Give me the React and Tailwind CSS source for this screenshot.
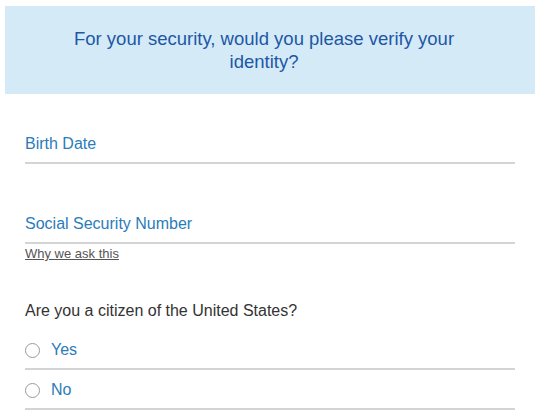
import React from "react";

function Radio({ label, first }) {
  return (
    <label
      className={`flex items-end border-b-2 border-[#d4d4d4] pb-[8px] cursor-pointer ${
        first ? "h-[49px]" : "h-[40px]"
      }`}
    >
      <span className="flex h-5 items-center">
        <span className="h-[15px] w-[15px] rounded-full border border-[#9a9a9a] bg-white" />
      </span>
      <span className="ml-[11px] text-[16px] leading-5 text-[#2b7cb9]">
        {label}
      </span>
    </label>
  );
}

export default function App() {
  return (
    <div className="min-h-[413px] w-[538px] bg-white font-['Liberation_Sans',Arial,sans-serif]">
      {/* Banner */}
      <div className="ml-[5px] pt-[6px]">
        <div className="flex h-[88px] w-[530px] items-center justify-center bg-[#d4eaf7] pl-[59px] pr-[71px]">
          <h1 className="text-center text-[18.5px] leading-[23px] text-[#1d57a5]">
            For your security, would you please verify your identity?
          </h1>
        </div>
      </div>

      {/* Form */}
      <div className="ml-[25px] w-[490px]">
        <div className="flex h-[70px] items-end border-b-2 border-[#d4d4d4] pb-[8px]">
          <span className="text-[16px] leading-5 text-[#2b7cb9]">Birth Date</span>
        </div>

        <div className="flex h-[80px] items-end border-b-2 border-[#d4d4d4] pb-[8px]">
          <span className="text-[16px] leading-5 text-[#2b7cb9]">
            Social Security Number
          </span>
        </div>
        <a className="mt-[2px] block w-fit text-[13px] leading-4 text-[#555] underline">
          Why we ask this
        </a>

        <p className="mt-[39px] text-[16px] leading-5 text-[#333]">
          Are you a citizen of the United States?
        </p>

        <Radio label="Yes" first />
        <Radio label="No" />
      </div>
    </div>
  );
}
